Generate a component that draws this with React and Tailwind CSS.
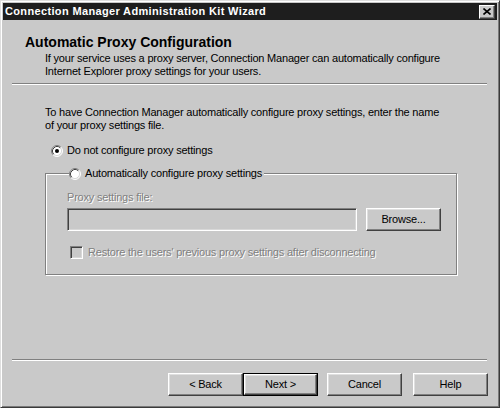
import React from 'react';

const Radio = ({ checked }) => (
  <svg width="12" height="12" viewBox="0 0 12 12" className="shrink-0">
    <circle cx="6" cy="6" r="5" fill="#fff" />
    <path d="M9.89 2.11 A5.5 5.5 0 0 0 2.11 9.89" fill="none" stroke="#808080" strokeWidth="1" />
    <path d="M2.11 9.89 A5.5 5.5 0 0 0 9.89 2.11" fill="none" stroke="#fff" strokeWidth="1" />
    <path d="M9.18 2.82 A4.5 4.5 0 0 0 2.82 9.18" fill="none" stroke="#404040" strokeWidth="1" />
    <path d="M2.82 9.18 A4.5 4.5 0 0 0 9.18 2.82" fill="none" stroke="#d8d8d8" strokeWidth="1" />
    {checked && <circle cx="6" cy="6" r="2" fill="#000" />}
  </svg>
);

const Button = ({ children, primary }) => {
  const face = (
    <div className="w-full h-full flex items-center justify-center border border-t-white border-l-white border-r-[#404040] border-b-[#404040] shadow-[inset_-1px_-1px_0_#808080,inset_1px_1px_0_#dfdfdf] text-[11px] tracking-[-0.2px]">
      {children}
    </div>
  );
  if (primary) {
    return <div className="w-[75px] h-[23px] border border-black">{face}</div>;
  }
  return <div className="w-[75px] h-[23px]">{face}</div>;
};

const App = () => {
  return (
    <div className="w-[500px] h-[408px] bg-[#c9c9c9] flex flex-col border border-t-[#dedede] border-l-[#dedede] border-r-[#3a3a3a] border-b-[#3a3a3a] shadow-[inset_1px_1px_0_#fff,inset_-1px_-1px_0_#7a7a7a] p-[2px] font-['Liberation_Sans',Arial,sans-serif] text-black">
      {/* Title bar */}
      <div className="h-[17px] bg-[#1e1e1e] flex items-center justify-between pl-[2px] pr-[2px]">
        <span className="text-white font-bold text-[11px] tracking-[0.35px] leading-none">
          Connection Manager Administration Kit Wizard
        </span>
        <div className="w-[16px] h-[14px] bg-[#c9c9c9] border border-t-white border-l-white border-r-[#404040] border-b-[#404040] shadow-[inset_-1px_-1px_0_#808080] flex items-center justify-center">
          <svg width="8" height="7" viewBox="0 0 8 7">
            <path d="M0.5 0.5 L7.5 6.5 M7.5 0.5 L0.5 6.5" stroke="#000" strokeWidth="1.6" />
          </svg>
        </div>
      </div>

      {/* Header */}
      <div className="pl-[22px] pt-[14px]">
        <h1 className="text-[14px] font-bold leading-[16px]">Automatic Proxy Configuration</h1>
        <p className="ml-[20px] mt-[2px] text-[11px] tracking-[-0.2px] leading-[13px]">
          If your service uses a proxy server, Connection Manager can automatically configure
          <br />
          Internet Explorer proxy settings for your users.
        </p>
      </div>
      <div className="ml-[9px] mr-[10px] mt-[5px] h-[2px] border-t border-t-[#808080] border-b border-b-white" />

      {/* Body */}
      <div className="ml-[42px] mt-[21px] text-[11px] tracking-[-0.2px] leading-[13px]">
        <p>
          To have Connection Manager automatically configure proxy settings, enter the name
          <br />
          of your proxy settings file.
        </p>

        <div className="flex items-center gap-[4px] pl-[6px] mt-[12px] h-[13px]">
          <Radio checked />
          <span>Do not configure proxy settings</span>
        </div>

        <fieldset className="w-[411px] mt-[10px] border border-[#808080] shadow-[1px_1px_0_#fff,inset_1px_1px_0_#fff] pl-[21px] pr-[15px] pb-[15px]">
          <legend className="ml-[2px] bg-[#c9c9c9] pr-[2px]">
            <div className="flex items-center gap-[4px] h-[13px]">
              <Radio />
              <span>Automatically configure proxy settings</span>
            </div>
          </legend>

          <p className="mt-[11px] text-[#808080] [text-shadow:1px_1px_0_#fff]">Proxy settings file:</p>
          <div className="flex items-center gap-[9px] mt-[4px]">
            <div className="w-[290px] h-[23px] border border-t-[#808080] border-l-[#808080] border-r-white border-b-white shadow-[inset_1px_1px_0_#404040,inset_-1px_-1px_0_#d8d8d8]" />
            <Button>Browse...</Button>
          </div>

          <div className="flex items-center gap-[5px] mt-[15px] pl-[3px] h-[13px]">
            <div className="w-[13px] h-[13px] shrink-0 border border-t-[#808080] border-l-[#808080] border-r-white border-b-white shadow-[inset_1px_1px_0_#404040,inset_-1px_-1px_0_#d8d8d8]" />
            <span className="text-[#808080] [text-shadow:1px_1px_0_#fff]">
              Restore the users' previous proxy settings after disconnecting
            </span>
          </div>
        </fieldset>
      </div>

      {/* Footer */}
      <div className="mt-auto pb-[9px]">
        <div className="ml-[9px] mr-[10px] h-[2px] border-t border-t-[#808080] border-b border-b-white" />
        <div className="flex justify-end pr-[9px] mt-[12px]">
          <Button>&lt; Back</Button>
          <Button primary>Next &gt;</Button>
          <div className="ml-[9px]">
            <Button>Cancel</Button>
          </div>
          <div className="ml-[11px]">
            <Button>Help</Button>
          </div>
        </div>
      </div>
    </div>
  );
};

export default App;
